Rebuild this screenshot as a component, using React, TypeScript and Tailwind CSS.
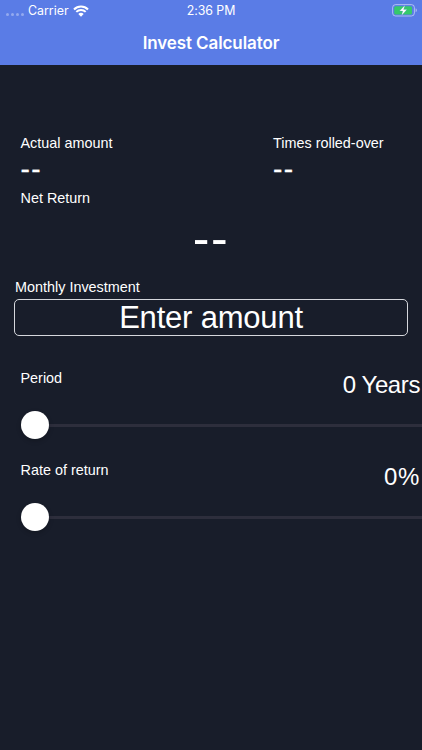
import React, { useState } from "react";

interface SliderRowProps {
  label: string;
  display: string;
  displayClassName: string;
  value: number;
  max: number;
  onChange: (value: number) => void;
}

const StatusBar: React.FC = () => {
  return (
    <div className="grid h-[21px] grid-cols-3 items-center pl-[6px] pr-[4px] font-['Inter'] text-[12.4px] leading-[21px] text-white">
      <div className="flex items-center">
        <div className="mr-[4px] mt-[7px] flex gap-[2px]">
          {[0, 1, 2, 3].map((dot) => (
            <span key={dot} className="size-[3px] rounded-full bg-white/35" />
          ))}
        </div>
        <span>Carrier</span>
        <svg className="ml-[4px]" width="16" height="12" viewBox="0 0 16 12" fill="none">
          <path d="M1 4.4A10 10 0 0 1 15 4.4" stroke="white" strokeWidth="2.1" />
          <path d="M3.3 6.9A6.7 6.7 0 0 1 12.7 6.9" stroke="white" strokeWidth="2" />
          <path d="M5.3 8.9A4.1 4.1 0 0 1 10.7 8.9L8 11.7Z" fill="white" />
        </svg>
      </div>
      <span className="pr-[2px] text-center tracking-[-0.05px]">2:36 PM</span>
      <svg className="justify-self-end" width="26" height="13" viewBox="0 0 26 13" fill="none">
        <rect x="0.6" y="0.6" width="21.8" height="11.4" rx="3" stroke="white" strokeOpacity="0.5" />
        <rect x="2.2" y="2.2" width="17.8" height="8.2" rx="1.5" fill="#35C96B" />
        <path d="M23.6 4.3C25.3 4.9 25.3 7.7 23.6 8.3Z" fill="white" fillOpacity="0.5" />
        <path d="M12.9 1.3L7.6 7H10.8L9.6 11.5L14.9 5.6H11.6Z" fill="white" stroke="#5A7CE6" strokeWidth="0.2" />
      </svg>
    </div>
  );
};

const SliderRow: React.FC<SliderRowProps> = ({ label, display, displayClassName, value, max, onChange }) => {
  const percent = (value / max) * 100;

  return (
    <div className="h-[92px]">
      <div className="flex h-[48px] justify-between pl-[20.5px] pr-[2px]">
        <span className="mt-[6px] text-[14.4px] leading-[18px]">{label}</span>
        <span className={`mt-[7px] text-[24px] leading-[30px] ${displayClassName}`}>{display}</span>
      </div>
      <div className="relative ml-[21px] flex h-[28px] items-center">
        <div className="mt-px h-[3px] w-full bg-[#2d2e3c]" />
        <div
          className="absolute -top-[0.5px] size-[28px] rounded-full bg-white shadow-[0_2px_5px_rgba(0,0,0,0.2)]"
          style={{ left: `${percent}%` }}
        />
        <input
          type="range"
          aria-label={label}
          min={0}
          max={max}
          value={value}
          onChange={(e) => onChange(Number(e.target.value))}
          className="absolute inset-0 h-full w-full opacity-0"
        />
      </div>
    </div>
  );
};

export default function App() {
  const [amount, setAmount] = useState("");
  const [years, setYears] = useState(0);
  const [rate, setRate] = useState(0);

  return (
    <div className="h-[750px] w-full overflow-hidden bg-[#181d2a] font-['Liberation_Sans',sans-serif] text-white">
      <header className="h-[65px] bg-[#5a7ce6]">
        <StatusBar />
        <h1 className="pt-[10px] text-center font-['Inter'] text-[17px] font-semibold leading-[24px] tracking-[-0.1px]">
          Invest Calculator
        </h1>
      </header>

      <section className="flex h-[116px] pl-[20.5px] pt-[69px]">
        <div className="w-[252.5px]">
          <p className="text-[14.4px] leading-[18px]">Actual amount</p>
          <p className="mt-[3px] text-[28px] leading-[28px] tracking-[1.4px] [-webkit-text-stroke:0.3px_white]">--</p>
        </div>
        <div>
          <p className="text-[14.4px] leading-[18px]">Times rolled-over</p>
          <p className="mt-[3px] text-[28px] leading-[28px] tracking-[1.4px] [-webkit-text-stroke:0.3px_white]">--</p>
        </div>
      </section>

      <section className="h-[97px] pt-[8px]">
        <p className="pl-[20.5px] text-[14.4px] leading-[18px]">Net Return</p>
        <p className="mt-[6px] text-center text-[50px] leading-[50px] tracking-[1.6px]">--</p>
      </section>

      <section className="px-[14px]">
        <label htmlFor="amount" className="block pl-px text-[14.4px] leading-[18px]">
          Monthly Investment
        </label>
        <input
          id="amount"
          value={amount}
          placeholder="Enter amount"
          onChange={(e) => setAmount(e.target.value)}
          className="mt-[3px] block h-[37px] w-full rounded-[5px] border border-[#d5d7dc] pt-px text-center text-[31px] leading-[34px] tracking-[-0.2px] placeholder:text-white placeholder:opacity-100"
        />
      </section>

      <section className="mt-[27px]">
        <SliderRow
          label="Period"
          display={`${years} Years`}
          displayClassName="tracking-[-0.4px]"
          value={years}
          max={50}
          onChange={setYears}
        />
        <SliderRow
          label="Rate of return"
          display={`${rate}%`}
          displayClassName="tracking-[0.6px]"
          value={rate}
          max={100}
          onChange={setRate}
        />
      </section>
    </div>
  );
}
